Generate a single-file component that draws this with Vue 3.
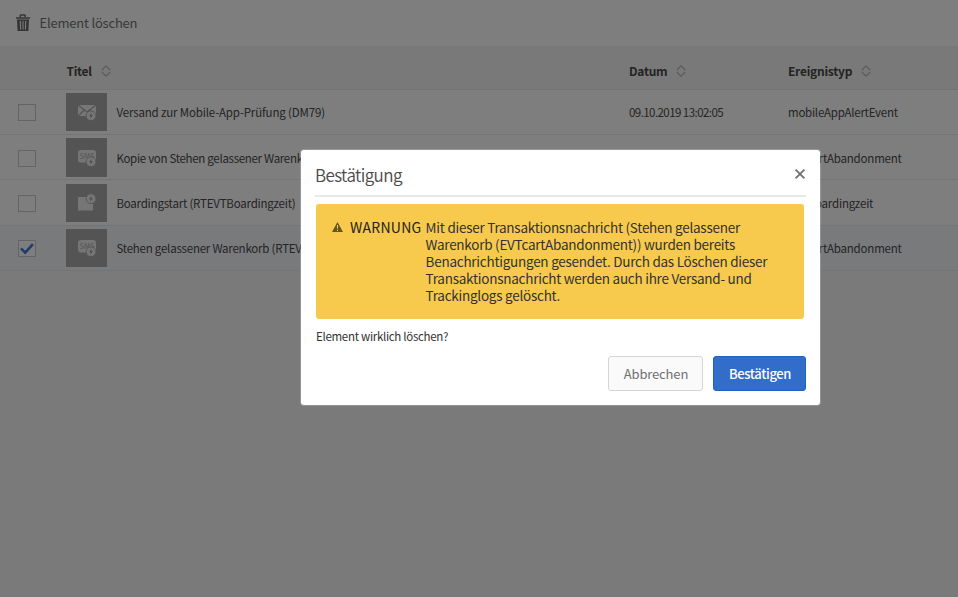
<script setup>
const columns = [
  { key: 'title', label: 'Titel' },
  { key: 'date', label: 'Datum' },
  { key: 'type', label: 'Ereignistyp' },
]
const rows = [
  { icon: 'mail', title: 'Versand zur Mobile-App-Prüfung (DM79)', date: '09.10.2019 13:02:05', type: 'mobileAppAlertEvent', selected: false },
  { icon: 'sms', title: 'Kopie von Stehen gelassener Warenkorb', date: '', type: 'EVTcartAbandonment', selected: false },
  { icon: 'event', title: 'Boardingstart (RTEVTBoardingzeit)', date: '', type: 'EVTBoardingzeit', selected: false },
  { icon: 'sms', title: 'Stehen gelassener Warenkorb (RTEVTcart)', date: '', type: 'EVTcartAbandonment', selected: true },
]
</script>

<template>
  <div class="page">
    <header class="toolbar">
      <svg class="trash" viewBox="0 0 16 18">
        <path d="M5.3 3V1.6Q5.3 1 6 1h3.4q.7 0 .7.6V3M1 4h14" fill="none" stroke="currentColor" stroke-width="1.5" />
        <path d="M2 5.5h12l-.6 11.6H2.6z" fill="currentColor" />
        <path d="M5.3 7l.3 8.4M8 7v8.4M10.7 7l-.3 8.4" stroke="#f8f8f8" stroke-width="1.1" />
      </svg>
      <span>Element löschen</span>
    </header>
    <div class="grid head">
      <span></span>
      <div v-for="c in columns" :key="c.key" class="col" :class="c.key">
        <span class="label">{{ c.label }}</span>
        <svg class="sort" viewBox="0 0 10 12"><path d="M.8 5L5 .8 9.2 5M.8 7L5 11.2 9.2 7" fill="none" stroke="currentColor" stroke-width="1.1" /></svg>
      </div>
    </div>
    <div v-for="(r, i) in rows" :key="i" class="grid row" :class="[r.icon, { selected: r.selected }]">
      <span class="check">
        <svg v-if="r.selected" viewBox="0 0 16 14"><path d="M2 6.8l4.3 4.4L13.9 2.7" fill="none" stroke="#3f76cf" stroke-width="2.6" /></svg>
      </span>
      <div class="item">
        <span class="thumb">
          <svg viewBox="0 0 20 18">
            <g v-if="r.icon === 'mail'">
              <path d="M1 2h18v11H1z" fill="#ececec" />
              <path d="M1 2l9 7 9-7M1 13l6.4-6M19 13l-6.4-6" fill="none" stroke="#a9a9a9" stroke-width="1.2" />
            </g>
            <g v-else-if="r.icon === 'sms'">
              <rect x="1" y="1" width="18" height="12.6" rx="3" fill="#ececec" />
              <text x="10" y="10.2" text-anchor="middle" class="glyph">SMS</text>
            </g>
            <path v-else d="M1 3h12l3 4v9.5H1z" fill="#ececec" />
            <g :transform="r.icon === 'event' ? 'translate(14 4.7)' : 'translate(14 12.8)'">
              <circle r="4.9" fill="#ececec" stroke="#a9a9a9" stroke-width=".9" />
              <path d="M.8-3.2L-1.8.5H.1L-.8 3.2 1.8-.5H-.1z" fill="#8c8c8c" />
            </g>
          </svg>
        </span>
        <span class="name">{{ r.title }}</span>
      </div>
      <span class="when">{{ r.date }}</span>
      <span class="kind">{{ r.type }}</span>
    </div>
    <div class="overlay">
      <section class="dialog" role="dialog">
        <div class="dialog-head">
          <h2>Bestätigung</h2>
          <svg class="close" viewBox="0 0 12 12"><path d="M1.6 1.6l8.8 8.8M10.4 1.6l-8.8 8.8" stroke="#707070" stroke-width="1.8" /></svg>
        </div>
        <div class="warning">
          <svg class="alert" viewBox="0 0 11 10"><path d="M5.5 0L11 10H0z" fill="#655522" /><path d="M5.5 3v3.6M5.5 7.7v1.2" stroke="#f7ca4d" stroke-width="1.1" /></svg>
          <span class="tag">WARNUNG</span>
          <p>Mit dieser Transaktionsnachricht (Stehen gelassener Warenkorb (EVTcartAbandonment)) wurden bereits Benachrichtigungen gesendet. Durch das Löschen dieser Transaktionsnachricht werden auch ihre Versand- und Trackinglogs gelöscht.</p>
        </div>
        <div class="question">Element wirklich löschen?</div>
        <footer>
          <button class="cancel">Abbrechen</button>
          <button class="confirm">Bestätigen</button>
        </footer>
      </section>
    </div>
  </div>
</template>

<style>
body { margin: 0; overflow: hidden; }
</style>
<style scoped>
.page {
  position: relative;
  box-sizing: border-box;
  width: 958px;
  height: 597px;
  overflow: hidden;
  background: #f5f5f5;
  color: #484848;
  font-family: "Noto Sans CJK SC", "Open Sans", sans-serif;
  font-size: 11.5px;
  white-space: nowrap;
}
.toolbar {
  display: flex;
  align-items: center;
  gap: 8.5px;
  box-sizing: border-box;
  height: 46px;
  padding-left: 15px;
  background: #fdfdfd;
  color: #707070;
  font-size: 13px;
  letter-spacing: -0.2px;
  line-height: 46px;
}
.trash { width: 16px; height: 18px; color: #686868; }
.grid {
  display: grid;
  grid-template-columns: 66.4px 562.6px 159px 1fr;
  align-items: center;
  box-sizing: border-box;
}
.head {
  height: 43.6px;
  padding-top: 8.4px;
  background: #f2f2f2;
  border-bottom: 1px solid #e8e8e8;
  font-weight: 700;
  font-size: 12px;
  letter-spacing: -0.25px;
}
.col { display: flex; align-items: center; gap: 9px; line-height: 20px; }
.sort { width: 10px; height: 12px; color: #b4b4b4; }
.row { height: 45.33px; padding-top: 1px; border-bottom: 1px solid #eaeaea; background: #fdfdfd; }
.selected { background: #f2f5f9; }
.check {
  display: flex;
  box-sizing: border-box;
  width: 18px;
  height: 17px;
  margin: 1px 0 0 18px;
  border: 1px solid #c8c8c8;
  background: #fdfdfd;
}
.check svg { width: 16px; height: 15px; }
.item { display: flex; align-items: center; gap: 9px; }
.thumb {
  display: flex;
  align-items: center;
  justify-content: center;
  width: 41px;
  height: 38.4px;
  background: #a9a9a9;
}
.thumb svg { width: 20px; height: 18px; overflow: visible; }
.glyph { font-size: 7.5px; fill: #aaa; }
.name, .when, .kind { line-height: 20px; }
.name { letter-spacing: -0.15px; }
.sms .name { letter-spacing: -0.3px; }
.selected .name { letter-spacing: -0.22px; }
.event .name { letter-spacing: -0.21px; }
.when { letter-spacing: -0.56px; }
.kind { letter-spacing: -0.2px; }
.mail .kind { letter-spacing: -0.25px; }
.overlay {
  position: absolute;
  inset: 0;
  background: rgba(0, 0, 0, 0.5);
}
.dialog {
  position: absolute;
  left: 301px;
  top: 150px;
  display: flex;
  flex-direction: column;
  box-sizing: border-box;
  width: 519px;
  height: 255px;
  padding: 0 14px 14px;
  border-radius: 3px;
  background: #fff;
  box-shadow: 0 0 1px 1px rgba(255, 255, 255, 0.2);
}
.dialog-head {
  display: flex;
  align-items: center;
  justify-content: space-between;
  box-sizing: border-box;
  height: 47px;
  padding-top: 3px;
  border-bottom: 2px solid #e8e8e8;
}
h2 { margin: 0; padding-top: 1px; font-size: 17px; font-weight: 350; line-height: 24px; letter-spacing: -0.6px; color: #4b4b4b; }
.close { width: 12px; height: 12px; }
.warning {
  display: flex;
  align-items: flex-start;
  box-sizing: border-box;
  width: 488px;
  height: 115px;
  margin: 7px 0 0 1px;
  padding: 15px 16px;
  border-radius: 3px;
  background: #f7ca4d;
  color: #323232;
  font-size: 13.5px;
  line-height: 17px;
}
.alert { width: 11px; height: 10px; margin-top: 3px; }
.tag { flex: none; width: 75.6px; margin-left: 7px; font-size: 14px; letter-spacing: 0.25px; color: #222; }
.warning p { width: 350px; margin: 0; letter-spacing: -0.25px; white-space: normal; }
.question { margin: 7px 0 0 1px; font-size: 11.5px; line-height: 20px; letter-spacing: -0.3px; color: #323232; }
footer { display: flex; justify-content: flex-end; gap: 10px; margin-top: auto; }
button {
  box-sizing: border-box;
  height: 35px;
  padding: 1px 0 0 1px;
  border-radius: 3px;
  font: 400 13px/32px "Noto Sans CJK SC", "Open Sans", sans-serif;
}
.cancel { width: 95px; border: 1px solid #d5d5d5; background: #fafafa; color: #707070; letter-spacing: -0.15px; }
.confirm { width: 93px; border: 1px solid #1f61c6; background: #326ec9; color: #fff; font-weight: 500; letter-spacing: -0.35px; }
</style>
